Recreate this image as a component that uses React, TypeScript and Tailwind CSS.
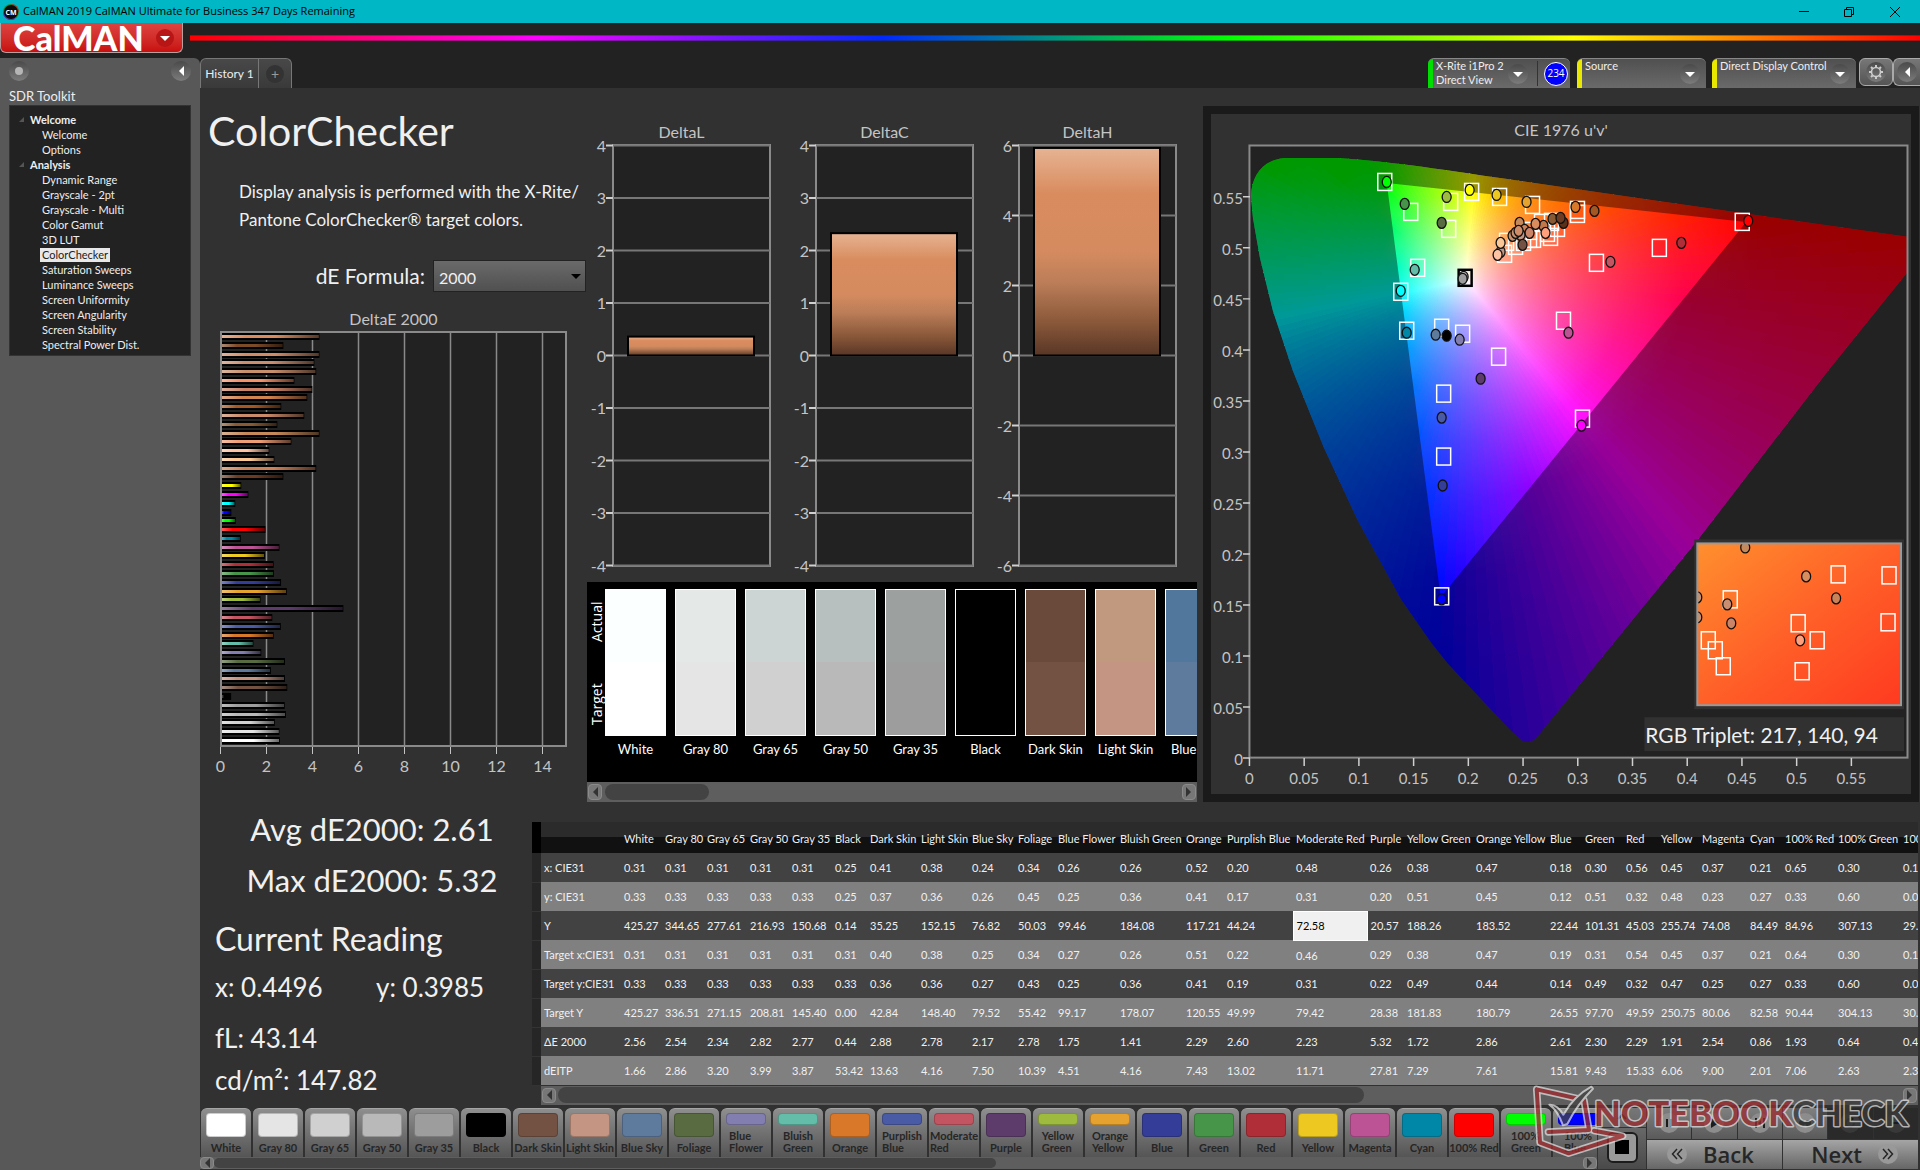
import type { ReactNode } from "react";

/*** colour patches: name, target, measured ***/
const PATCHES = [
  { name: "White", target: "#ffffff", actual: "#fcffff" },
  { name: "Gray 80", target: "#e5e5e5", actual: "#e4e9e8" },
  { name: "Gray 65", target: "#d0d0d0", actual: "#cdd4d4" },
  { name: "Gray 50", target: "#b9b9b9", actual: "#b8bfbf" },
  { name: "Gray 35", target: "#9d9d9d", actual: "#9ca09f" },
  { name: "Black", target: "#000000", actual: "#000000" },
  { name: "Dark Skin", target: "#735243", actual: "#6a4a3a" },
  { name: "Light Skin", target: "#c39582", actual: "#c1997f" },
  { name: "Blue Sky", target: "#5e7a9d", actual: "#52779c" },
  { name: "Foliage", target: "#586b41", actual: "#586b41" },
  { name: "Blue Flower", target: "#827eaf", actual: "#827eaf" },
  { name: "Bluish Green", target: "#63bda8", actual: "#63bda8" },
  { name: "Orange", target: "#d97829", actual: "#d97829" },
  { name: "Purplish Blue", target: "#4a5ba5", actual: "#4a5ba5" },
  { name: "Moderate Red", target: "#c35461", actual: "#c35461" },
  { name: "Purple", target: "#5d3c6b", actual: "#5d3c6b" },
  { name: "Yellow Green", target: "#9ebb40", actual: "#9ebb40" },
  { name: "Orange Yellow", target: "#e6a22f", actual: "#e6a22f" },
  { name: "Blue", target: "#343d97", actual: "#343d97" },
  { name: "Green", target: "#479549", actual: "#479549" },
  { name: "Red", target: "#b02e37", actual: "#b02e37" },
  { name: "Yellow", target: "#edc821", actual: "#edc821" },
  { name: "Magenta", target: "#bb5394", actual: "#bb5394" },
  { name: "Cyan", target: "#0087a7", actual: "#0087a7" },
  { name: "100% Red", target: "#ff0000", actual: "#ff0000" },
  { name: "100% Green", target: "#00ff00", actual: "#00ff00" },
  { name: "100% Blue", target: "#0000ff", actual: "#0000ff" },
];

const COL_WIDTHS = [
  41, 42, 43, 42, 43, 35, 51, 51, 46, 40, 62, 66, 41, 69, 74, 37, 69, 74, 35,
  41, 35, 41, 48, 35, 53, 65, 60,
];

const ROWS = [
  { label: "x: CIE31", values: "0.31 0.31 0.31 0.31 0.31 0.25 0.41 0.38 0.24 0.34 0.26 0.26 0.52 0.20 0.48 0.26 0.38 0.47 0.18 0.30 0.56 0.45 0.37 0.21 0.65 0.30 0.15" },
  { label: "y: CIE31", values: "0.33 0.33 0.33 0.33 0.33 0.25 0.37 0.36 0.26 0.45 0.25 0.36 0.41 0.17 0.31 0.20 0.51 0.45 0.12 0.51 0.32 0.48 0.23 0.27 0.33 0.60 0.06" },
  { label: "Y", values: "425.27 344.65 277.61 216.93 150.68 0.14 35.25 152.15 76.82 50.03 99.46 184.08 117.21 44.24 72.58 20.57 188.26 183.52 22.44 101.31 45.03 255.74 74.08 84.49 84.96 307.13 29.89" },
  { label: "Target x:CIE31", values: "0.31 0.31 0.31 0.31 0.31 0.31 0.40 0.38 0.25 0.34 0.27 0.26 0.51 0.22 0.46 0.29 0.38 0.47 0.19 0.31 0.54 0.45 0.37 0.21 0.64 0.30 0.15" },
  { label: "Target y:CIE31", values: "0.33 0.33 0.33 0.33 0.33 0.33 0.36 0.36 0.27 0.43 0.25 0.36 0.41 0.19 0.31 0.22 0.49 0.44 0.14 0.49 0.32 0.47 0.25 0.27 0.33 0.60 0.06" },
  { label: "Target Y", values: "425.27 336.51 271.15 208.81 145.40 0.00 42.84 148.40 79.52 55.42 99.17 178.07 120.55 49.99 79.42 28.38 181.83 180.79 26.55 97.70 49.59 250.75 80.06 82.58 90.44 304.13 30.70" },
  { label: "ΔE 2000", values: "2.56 2.54 2.34 2.82 2.77 0.44 2.88 2.78 2.17 2.78 1.75 1.41 2.29 2.60 2.23 5.32 1.72 2.86 2.61 2.30 2.29 1.91 2.54 0.86 1.93 0.64 0.45" },
  { label: "dEITP", values: "1.66 2.86 3.20 3.99 3.87 53.42 13.63 4.16 7.50 10.39 4.51 4.16 7.43 13.02 11.71 27.81 7.29 7.61 15.81 9.43 15.33 6.06 9.00 2.01 7.06 2.63 2.30" },
];

/*** DeltaE bars, top to bottom ***/
const DELTA_E: [number, string][] = [
  [4.28, "#d98c5e"], [2.71, "#7d4a28"], [4.28, "#d08c68"], [4.06, "#c98d70"],
  [4.14, "#c78f6c"], [3.19, "#f4926a"], [3.97, "#cb8468"], [3.75, "#d0824f"],
  [2.62, "#a45722"], [3.62, "#cb8a69"], [2.45, "#875a33"], [4.28, "#c68a5a"],
  [3.06, "#ee9d74"], [2.1, "#fdc3a3"], [2.32, "#fac796"], [4.14, "#cb8259"],
  [2.71, "#6c3b22"], [0.88, "#ffff00"], [1.19, "#ff00ff"], [0.62, "#00ffff"],
  [0.45, "#0000ff"], [0.64, "#00ff00"], [1.93, "#ff0000"], [0.86, "#0087a7"],
  [2.54, "#bb5394"], [1.91, "#edc821"], [2.29, "#b02e37"], [2.3, "#479549"],
  [2.61, "#343d97"], [2.86, "#e6a22f"], [1.72, "#9ebb40"], [5.32, "#5d3c6b"],
  [2.23, "#c35461"], [2.6, "#4a5ba5"], [2.29, "#d97829"], [1.41, "#63bda8"],
  [1.75, "#827eaf"], [2.78, "#586b41"], [2.17, "#5e7a9d"], [2.78, "#c39582"],
  [2.88, "#735243"], [0.44, "#000000"], [2.77, "#9d9d9d"], [2.82, "#b9b9b9"],
  [2.34, "#d0d0d0"], [2.54, "#e5e5e5"], [2.56, "#ffffff"],
];

const TREE = [
  { title: "Welcome", items: ["Welcome", "Options"] },
  {
    title: "Analysis",
    items: [
      "Dynamic Range", "Grayscale - 2pt", "Grayscale - Multi", "Color Gamut",
      "3D LUT", "ColorChecker", "Saturation Sweeps", "Luminance Sweeps",
      "Screen Uniformity", "Screen Angularity", "Screen Stability",
      "Spectral Power Dist.",
    ],
  },
];

/*** chromaticity chart geometry ***/
const U0 = 1249.5;
const V0 = 758;
const U_SCALE = 1096;
const V_SCALE = 1022;
const WHITE = { x: 1466, y: 279 };
const TRIANGLE = [[1387, 182], [1747, 221], [1441, 597]];
const LOCUS =
  "M1251 195 C1252 175 1262 159 1285 157 L1338 157 C1390 160 1450 170 1521 180 L1659 200 L1908 236 L1908 272 L1829 370 L1698 540 L1538 736 Q1531 744 1524 741 Q1516 736 1494 712 L1448 663 L1432 643 L1402 600 L1358 520 L1324 447 L1293 370 L1273 310 L1260 257 L1253 217 Z";

const SQUARES = [
  [1385, 181], [1411, 211], [1451, 201], [1472, 191], [1500, 196], [1533, 204],
  [1578, 209], [1578, 213], [1449, 228], [1418, 267], [1401, 291], [1407, 330],
  [1442, 327], [1463, 333], [1499, 356], [1564, 320], [1597, 262], [1660, 247],
  [1743, 221], [1444, 393], [1444, 456], [1583, 418], [1442, 596], [1507, 241],
  [1505, 253], [1516, 245], [1524, 241], [1530, 238], [1534, 238], [1542, 222],
  [1551, 236], [1558, 227], [1552, 221], [1530, 230], [1548, 232],
];

const DOTS: [number, number, string][] = [
  [1447, 196, "#9ebb40"], [1470, 189, "#ffff00"], [1497, 194, "#edc821"],
  [1527, 201, "#e6a22f"], [1576, 206, "#d97829"], [1595, 210, "#a45722"],
  [1564, 222, "#5a3019"], [1553, 218, "#875a33"], [1561, 217, "#6c3b22"],
  [1544, 225, "#c07848"], [1520, 222, "#c68a5a"], [1525, 229, "#cb8259"],
  [1521, 234, "#c39582"], [1513, 235, "#c78f6c"], [1516, 232, "#c98d70"],
  [1519, 230, "#d08c68"], [1536, 223, "#d98c5e"], [1530, 232, "#cb8468"],
  [1546, 232, "#ff9f7c"], [1523, 244, "#735243"], [1501, 251, "#c39582"],
  [1501, 242, "#fac796"], [1498, 254, "#fdc3a3"], [1442, 222, "#586b41"],
  [1611, 261, "#c35461"], [1387, 181, "#00ff00"], [1405, 203, "#479549"],
  [1415, 269, "#63bda8"], [1401, 290, "#00ffff"], [1407, 332, "#0087a7"],
  [1436, 334, "#5e7a9d"], [1447, 335, "#000000"], [1460, 339, "#827eaf"],
  [1569, 332, "#bb5394"], [1682, 242, "#b02e37"], [1749, 220, "#ff0000"],
  [1481, 378, "#5d3c6b"], [1442, 417, "#4a5ba5"], [1443, 485, "#343d97"],
  [1582, 425, "#ff00ff"], [1442, 599, "#0000ff"], [1464, 276, "#b9b9b9"],
  [1463, 278, "#9d9d9d"],
];

const INSET_SQUARES = [
  [1839, 574], [1890, 575], [1731, 599], [1799, 623], [1889, 622], [1818, 640],
  [1709, 640], [1716, 650], [1724, 666], [1803, 671],
];

const INSET_DOTS: [number, number, string][] = [
  [1746, 547, "#c68a5a"], [1807, 576, "#d98c5e"], [1837, 598, "#cb8259"],
  [1728, 604, "#c98d70"], [1732, 623, "#cb8468"], [1801, 640, "#ff9f7c"],
  [1698, 597, "#c78f6c"], [1698, 617, "#c78f6c"],
];

// display colour for a point of the u'v' plane, brightest channel at full
function colorAt(px: number, py: number) {
  const u = (px - U0) / U_SCALE;
  const v = (V0 - py) / V_SCALE;
  const X = (9 * u) / (4 * v);
  const Z = (12 - 3 * u - 20 * v) / (4 * v);
  const rgb = [
    3.2406 * X - 1.5372 - 0.4986 * Z,
    -0.9689 * X + 1.8758 + 0.0415 * Z,
    0.0557 * X - 0.204 + 1.057 * Z,
  ].map((c) => Math.max(c, 0));
  const top = Math.max(...rgb);
  return `rgb(${rgb.map((c) => Math.round(255 * Math.pow(c / top, 0.77))).join(",")})`;
}

const WEDGES = Array.from({ length: 180 }, (_, i) => {
  const a = (i * Math.PI) / 90;
  const mid = a + Math.PI / 180;
  const end = a + Math.PI / 85;
  const r = 620;
  const stops = [0, 10, 20, 35, 50, 70, 90, 120, 160, 220, 300, 400, 500].map(
    (d) => {
      // stay inside the region where the conversion holds
      const y = Math.min(WHITE.y + d * Math.sin(mid), 748);
      const x = Math.max(WHITE.x + d * Math.cos(mid), 1240);
      return { d: d / r, c: colorAt(x, y) };
    }
  );
  return {
    path: `M${WHITE.x} ${WHITE.y}L${WHITE.x + r * Math.cos(a)} ${WHITE.y + r * Math.sin(a)}L${WHITE.x + r * Math.cos(end)} ${WHITE.y + r * Math.sin(end)}Z`,
    stops,
    r,
  };
});

/*****************************************************
           Small parts
*****************************************************/
function RoundIcon({ children }: { children: ReactNode }) {
  return (
    <span className="grid size-5 shrink-0 place-content-center rounded-full bg-linear-to-b from-[#4a4a4a] to-[#7c7c7c]">
      {children}
    </span>
  );
}

function Triangle({ dir, className }: { dir: "left" | "right" | "down"; className?: string }) {
  const d =
    dir === "left" ? "M8 0 3 5l5 5z" : dir === "right" ? "M2 0l5 5-5 5z" : "M0 3h10L5 8z";
  return (
    <svg viewBox="0 0 10 10" className={className ?? "size-[10px]"} fill="currentColor">
      <path d={d} />
    </svg>
  );
}

function ScrollButton({ dir }: { dir: "left" | "right" }) {
  return (
    <button
      aria-label={`Scroll ${dir}`}
      className="grid h-full w-[14px] shrink-0 place-content-center rounded-sm border border-[#8a8a8a] bg-[#777] text-[#333]"
    >
      <Triangle dir={dir} />
    </button>
  );
}

/*****************************************************
           Header
*****************************************************/
function TitleBar() {
  return (
    <div className="flex h-[23px] items-center bg-[#00b7c5] pl-[3px] font-['Open_Sans','Noto_Sans',sans-serif] text-black">
      <svg viewBox="0 0 16 16" className="mr-1 size-4">
        <circle cx="8" cy="8" r="8" fill="#1f8a3a" />
        <path d="M8 8 0 8A8 8 0 0 0 12 15Z" fill="#5a35c8" />
        <path d="M8 8 16 8A8 8 0 0 0 8 0Z" fill="#b03a2a" />
        <circle cx="8" cy="8" r="7" fill="#0a0a0a" />
        <text x="8" y="11" textAnchor="middle" fontSize="7" fontWeight="700" fill="#fff">CM</text>
      </svg>
      <span className="text-[11px]">CalMAN 2019 CalMAN Ultimate for Business 347 Days Remaining</span>
      <div className="ml-auto flex pr-[19px]">
        <button aria-label="Minimize" className="mr-[33px]">
          <svg viewBox="0 0 12 12" className="size-3" stroke="currentColor" fill="none"><path d="M1 5.500h10" /></svg>
        </button>
        <button aria-label="Restore" className="mr-[34px]">
          <svg viewBox="0 0 12 12" className="size-3" stroke="currentColor" fill="none"><path d="M1.500 3.500h7v7h-7zM3.500 3.500v-2h7v7h-2" /></svg>
        </button>
        <button aria-label="Close">
          <svg viewBox="0 0 12 12" className="size-3" stroke="currentColor" fill="none"><path d="M1 1l10 10M11 1L1 11" /></svg>
        </button>
      </div>
    </div>
  );
}

function Brand() {
  return (
    <div className="flex h-[35px] items-start">
      <button className="flex h-[30px] w-[183px] shrink-0 items-center justify-between rounded-b-md border border-t-0 border-[#b8a0a0] bg-linear-to-b from-[#dd4340] to-[#c80d0d] pr-2 pl-3 text-[34px] leading-[28px] font-black text-white">
        CalMAN
        <span className="grid size-[18px] place-content-center rounded-full bg-[#b81616]">
          <Triangle dir="down" />
        </span>
      </button>
      <div className="mt-3 ml-[7px] h-[6px] flex-1 border-y border-[#222]/40 bg-[linear-gradient(to_right,#f00,#f0f_20%,#0028ff_40%,#0f0_60%,#ff0_80%,#f00)]" />
    </div>
  );
}

function Sidebar() {
  return (
    <aside className="w-[200px] shrink-0 rounded-tr-md bg-[#585858] pt-[3px] pr-[9px] pl-[9px]">
      <div className="flex items-center justify-between">
        <RoundIcon><span className="block size-2 rounded-full bg-[#b5b5b5]" /></RoundIcon>
        <button aria-label="Collapse" className="text-white">
          <RoundIcon><Triangle dir="left" /></RoundIcon>
        </button>
      </div>
      <h2 className="mt-[5px] text-[13px] leading-5 text-[#eee]">SDR Toolkit</h2>
      <nav className="mt-[-1px] border border-[#333] bg-[#222] pt-[6px] pb-[3px] text-[11px] text-[#eee]">
        {TREE.map((g) => (
          <div key={g.title}>
            <h3 className="flex items-center gap-[6px] pl-[9px] leading-[15px] font-bold">
              <svg viewBox="0 0 6 6" className="size-[5px]" fill="#555"><path d="M6 0v6H0z" /></svg>
              {g.title}
            </h3>
            <ul>
              {g.items.map((item) => (
                <li key={item} className="flex h-[15px] items-center pl-[30px]">
                  <a
                    href="#"
                    className={item === "ColorChecker" ? "bg-[#e8e8e8] px-[2px] leading-[14px] text-[#222]" : "px-[2px] leading-[14px]"}
                  >
                    {item}
                  </a>
                </li>
              ))}
            </ul>
          </div>
        ))}
      </nav>
    </aside>
  );
}

function Device({ name, sub, bar, width, children }: { name: string; sub?: string; bar: string; width: string; children?: ReactNode }) {
  return (
    <div className={`flex h-[30px] overflow-hidden rounded-t-md border-t border-[#888] bg-linear-to-b from-[#505050] to-[#6a6a6a] ${width}`}>
      <span className={`w-[5px] shrink-0 ${bar}`} />
      <button className="flex min-w-0 flex-1 items-center justify-between pr-[6px] pl-[3px] text-left text-[#eee]">
        <span className="self-start text-[11px] leading-[14px] whitespace-nowrap">
          {name}
          <br />
          {sub}
        </span>
        <span className="text-white"><RoundIcon><Triangle dir="down" /></RoundIcon></span>
      </button>
      {children}
    </div>
  );
}

function TopTabs() {
  return (
    <div className="flex h-[30px] items-start">
      <div className="flex h-[30px] overflow-hidden rounded-t-md border border-b-0 border-[#777] bg-linear-to-b from-[#484848] to-[#3a3a3a]">
        <button className="w-[58px] border-r border-[#777] text-xs whitespace-nowrap text-[#eee]">History 1</button>
        <button aria-label="New tab" className="grid w-8 place-content-center">
          <span className="grid size-[18px] place-content-center rounded-full bg-[#333] text-sm leading-none text-[#999]">+</span>
        </button>
      </div>
      <div className="ml-auto flex items-start">
        <Device name="X-Rite i1Pro 2" sub="Direct View" bar="bg-[#0d0]" width="w-[142px]">
          <span className="my-[2px] ml-[3px] w-px bg-[#333]" />
          <span className="mr-[2px] ml-[6px] grid size-[24px] shrink-0 place-content-center self-center rounded-full border border-white bg-[#00f] font-['Open_Sans',sans-serif] text-[10px] text-white">234</span>
        </Device>
        <span className="w-[7px]" />
        <Device name="Source" bar="bg-[#e8e800]" width="w-[129px]" />
        <span className="w-[6px]" />
        <Device name="Direct Display Control" bar="bg-[#e8e800]" width="w-[144px]" />
        <button aria-label="Settings" className="ml-[3px] grid h-[28px] w-[34px] place-content-center rounded-md border border-[#aaa] bg-linear-to-b from-[#777] to-[#555]">
          <RoundIcon>
            <svg viewBox="0 0 16 16" className="size-4" fill="none" stroke="#ccc">
              <circle cx="8" cy="8" r="4.500" strokeWidth="1.600" />
              <path d="M8 1v2M8 13v2M1 8h2M13 8h2M3 3l1.500 1.500M11.500 11.500L13 13M13 3l-1.500 1.500M4.500 11.500L3 13" strokeWidth="2" />
            </svg>
          </RoundIcon>
        </button>
        <button aria-label="Expand" className="grid h-[28px] w-[27px] place-content-center rounded-l-md border border-r-0 border-[#aaa] bg-linear-to-b from-[#777] to-[#555] text-white">
          <RoundIcon><Triangle dir="left" /></RoundIcon>
        </button>
      </div>
    </div>
  );
}

/*****************************************************
           Charts
*****************************************************/
function DeltaEChart() {
  return (
    <svg viewBox="0 0 387 450" className="block w-full" fontSize="16" fill="#c4c4c4">
      <defs>
        <linearGradient id="shineX">
          <stop offset="0" stopColor="#fff" stopOpacity="0.35" />
          <stop offset="0.250" stopColor="#fff" stopOpacity="0" />
          <stop offset="0.550" stopColor="#000" stopOpacity="0" />
          <stop offset="1" stopColor="#000" stopOpacity="0.6" />
        </linearGradient>
      </defs>
      <rect x="21" y="1" width="345" height="414" fill="#222" />
      {[2, 4, 6, 8, 10, 12, 14].map((t) => (
        <path key={t} d={`M${20.5 + t * 23} 1v414`} stroke="#8a8a8a" strokeWidth="1.500" />
      ))}
      {DELTA_E.map(([value, color], i) => {
        const y = Math.round(5 + i * 8.78);
        const w = value * 23;
        return (
          <g key={i}>
            <rect x="21" y={y - 3} width={w} height="7" fill="#000" />
            <rect x="22" y={y - 1} width={w - 2} height="3" fill={color} />
            <rect x="22" y={y - 1} width={w - 2} height="3" fill="url(#shineX)" />
          </g>
        );
      })}
      <rect x="21" y="1" width="345" height="414" fill="none" stroke="#8a8a8a" strokeWidth="2" />
      {[0, 2, 4, 6, 8, 10, 12, 14].map((t) => (
        <g key={t}>
          <path d={`M${20.5 + t * 23} 416v7`} stroke="#c4c4c4" />
          <text x={20.5 + t * 23} y="441" textAnchor="middle">{t}</text>
        </g>
      ))}
    </svg>
  );
}

function DeltaChart({ title, max, step, value }: { title: string; max: number; step: number; value: number }) {
  const y = (v: number) => 213.5 - (v / max) * 210;
  const ticks: number[] = [];
  for (let t = max; t >= -max; t -= step) ticks.push(t);
  return (
    <figure className="min-w-0 flex-1">
      <figcaption className="pr-[14px] text-center text-base leading-5 text-[#c4c4c4]">{title}</figcaption>
      <svg viewBox="0 0 203 433" className="block w-full overflow-visible" fontSize="16" fill="#c4c4c4">
        <defs>
          <linearGradient id="copper" x2="0" y2="1">
            <stop offset="0" stopColor="#e6b393" />
            <stop offset="0.220" stopColor="#d98c5e" />
            <stop offset="0.500" stopColor="#d58b5f" />
            <stop offset="0.650" stopColor="#bb7d58" />
            <stop offset="0.850" stopColor="#875638" />
            <stop offset="1" stopColor="#583626" />
          </linearGradient>
        </defs>
        <rect x="26" y="3" width="157" height="421" fill="#222" stroke="#8a8a8a" strokeWidth="2" />
        {ticks.map((t) => (
          <g key={t}>
            <path d={`M25 ${y(t)}h158`} stroke="#777" strokeWidth="2" />
            <path d={`M19 ${y(t)}h7`} stroke="#d0d0d0" strokeWidth="2" />
            <text x="19" y={y(t) + 6} textAnchor="end">{t}</text>
          </g>
        ))}
        <rect x="41" y={y(value)} width="126" height={y(0) - y(value)} fill="url(#copper)" stroke="#000" strokeWidth="2" />
      </svg>
    </figure>
  );
}

function Marker({ x, y, color }: { x: number; y: number; color: string }) {
  return <ellipse cx={x} cy={y} rx="4.500" ry="5.500" fill={color} stroke="#111" strokeWidth="1.300" />;
}

function CieChart() {
  const tri = `M${TRIANGLE.map((p) => p.join(" ")).join("L")}Z`;
  const steps = Array.from({ length: 12 }, (_, i) => i);
  return (
    <svg viewBox="1211 142 701 652" className="block w-full" fontSize="15" fill="#c4c4c4">
      <defs>
        <clipPath id="locus"><path d={LOCUS} /></clipPath>
        <clipPath id="inset"><rect x="1698" y="543" width="204" height="162" /></clipPath>
        <linearGradient id="insetFill" x1="0" y1="0" x2="1" y2="1">
          <stop offset="0" stopColor="#ff8f2e" />
          <stop offset="0.500" stopColor="#ff6028" />
          <stop offset="1" stopColor="#ff3a20" />
        </linearGradient>
        {WEDGES.map((w, i) => (
          <radialGradient key={i} id={`w${i}`} gradientUnits="userSpaceOnUse" cx={WHITE.x} cy={WHITE.y} r={w.r}>
            {w.stops.map((s) => <stop key={s.d} offset={s.d} stopColor={s.c} />)}
          </radialGradient>
        ))}
      </defs>
      <rect x="1249" y="144" width="660" height="614" fill="#222" />
      <g clipPath="url(#locus)">
        <g shapeRendering="crispEdges">
          {WEDGES.map((w, i) => <path key={i} d={w.path} fill={`url(#w${i})`} />)}
        </g>
        <path d={`M1211 142h701v652h-701z${tri}`} fillRule="evenodd" fill="#000" fillOpacity="0.4" />
      </g>
      <rect x="1249.500" y="144.500" width="659" height="613" fill="none" stroke="#8a8a8a" strokeWidth="2" />
      {steps.map((i) => (
        <g key={i}>
          <path d={`M${U0 + i * 54.8} 758v8M1250 ${V0 - i * 51.1}h-7`} stroke="#d0d0d0" strokeWidth="1.500" />
          <text x={U0 + i * 54.8} y="784" textAnchor="middle">{i * 5 / 100}</text>
          <text x="1243" y={V0 - i * 51.1 + 7} textAnchor="end">{i * 5 / 100}</text>
        </g>
      ))}
      <g fill="none" stroke="#fff" strokeWidth="1.500">
        {SQUARES.map(([x, y], i) => <rect key={i} x={x - 7} y={y - 8.5} width="14" height="17" />)}
      </g>
      <rect x="1459" y="269" width="13" height="16" fill="none" stroke="#000" strokeWidth="2.500" />
      {DOTS.map(([x, y, c], i) => <Marker key={i} x={x} y={y} color={c} />)}

      <rect x="1695" y="539" width="210" height="170" fill="#313131" />
      <rect x="1698" y="543" width="204" height="162" fill="url(#insetFill)" />
      <g clipPath="url(#inset)">
        <g fill="none" stroke="#fff" strokeWidth="1.500">
          {INSET_SQUARES.map(([x, y], i) => <rect key={i} x={x - 7} y={y - 8.5} width="14" height="17" />)}
        </g>
        {INSET_DOTS.map(([x, y, c], i) => <Marker key={i} x={x} y={y} color={c} />)}
      </g>
      <rect x="1698" y="543" width="204" height="162" fill="none" stroke="#999" strokeWidth="2" />
      <rect x="1645" y="717" width="260" height="34" fill="#313131" />
      <text x="1646" y="743" fontSize="21" fill="#f0f0f0">RGB Triplet: 217, 140, 94</text>
    </svg>
  );
}

/*****************************************************
           Panels
*****************************************************/
function Intro() {
  return (
    <section className="pt-[13px]">
      <h1 className="pl-2 text-[41px] leading-[60px] text-[#f0f0f0]">ColorChecker</h1>
      <p className="mt-[17px] pl-[39px] text-[17px] leading-7 whitespace-nowrap text-[#f0f0f0]">
        Display analysis is performed with the X-Rite/
        <br />
        Pantone ColorChecker® target colors.
      </p>
      <div className="mt-[26px] flex h-8 items-center justify-end pr-px">
        <label htmlFor="formula" className="mr-2 text-[21px] text-[#f0f0f0]">dE Formula:</label>
        <div className="relative">
          <select
            id="formula"
            defaultValue="2000"
            className="h-8 w-[153px] appearance-none border border-[#222] bg-linear-to-b from-[#6a6a6a] to-[#505050] pt-[3px] pl-[5px] text-base text-[#f0f0f0]"
          >
            <option>2000</option>
            <option>1994</option>
            <option>1976</option>
          </select>
          <Triangle dir="down" className="pointer-events-none absolute top-[11px] right-[5px] size-[10px] text-black" />
        </div>
      </div>
      <h3 className="mt-[15px] text-center text-base leading-6 text-[#c4c4c4]">DeltaE 2000</h3>
      <DeltaEChart />
    </section>
  );
}

function Comparison() {
  return (
    <div className="mt-[7px] mr-[6px] bg-black">
      <div className="flex h-[200px] overflow-hidden pt-[7px]">
        <div className="flex w-[18px] shrink-0 flex-col items-center font-['Open_Sans',sans-serif] text-sm leading-[17px] text-white">
          <span className="flex h-[66px] rotate-180 items-center justify-center [writing-mode:vertical-rl]">Actual</span>
          <span className="mt-4 flex h-[66px] rotate-180 items-center justify-center [writing-mode:vertical-rl]">Target</span>
        </div>
        {PATCHES.slice(0, 9).map((p) => (
          <div key={p.name} className="mr-[9px] w-[61px] shrink-0 text-center text-[13px] text-white">
            <div className="h-[147px] border border-white" style={{ background: `linear-gradient(${p.actual} 50%, ${p.target} 50%)` }} />
            <span className="mt-[3px] block leading-5 whitespace-nowrap">{p.name}</span>
          </div>
        ))}
      </div>
      <div className="flex h-5 items-center bg-[#5e5e5e] px-px py-[2px]">
        <ScrollButton dir="left" />
        <span className="ml-[3px] h-4 w-[104px] rounded-lg bg-[#434343]" />
        <span className="ml-auto h-full"><ScrollButton dir="right" /></span>
      </div>
    </div>
  );
}

function Readings() {
  return (
    <section className="w-[332px] shrink-0 pl-[15px] text-[#f0f0f0]">
      <div className="-mt-4 pr-[3px] text-center text-[31px] leading-[51px]">
        <p>Avg dE2000: 2.61</p>
        <p>Max dE2000: 5.32</p>
      </div>
      <h2 className="mt-[7px] text-[32px] leading-[51px]">Current Reading</h2>
      <p className="mt-[2px] flex text-[26px] leading-[42px]">
        <span className="w-[161px]">x: 0.4496</span>
        <span>y: 0.3985</span>
      </p>
      <p className="mt-[9px] text-[26px] leading-[42px]">fL: 43.14</p>
      <p className="text-[26px] leading-[42px]">cd/m²: 147.82</p>
    </section>
  );
}

function DataTable() {
  return (
    <section className="mt-[2px] flex min-w-0 flex-1 flex-col pr-[2px]">
      <div className="overflow-hidden">
        <table className="w-[1428px] table-fixed border-collapse text-left text-[11px] text-[#f0f0f0]">
          <colgroup>
            <col className="w-[9px]" />
            <col className="w-[80px]" />
            {COL_WIDTHS.map((w, i) => <col key={i} style={{ width: w }} />)}
          </colgroup>
          <thead>
            <tr className="h-[31px] bg-linear-to-b from-[#2b2b2b] from-50% to-[#111] to-50%">
              <td className="bg-black" />
              <td />
              {PATCHES.map((p) => (
                <th key={p.name} scope="col" className="overflow-visible pt-[3px] pr-0 pl-[3px] font-normal whitespace-nowrap">{p.name}</th>
              ))}
            </tr>
          </thead>
          <tbody>
            {ROWS.map((row, r) => (
              <tr key={row.label} className={r % 2 ? "h-[29px] bg-[#808080]" : "h-[29px] bg-[#424242]"}>
                <td className="border-b border-[#333] bg-[#262626]" />
                <th scope="row" className="p-0 pt-[2px] pl-[3px] font-normal whitespace-nowrap">{row.label}</th>
                {row.values.split(" ").map((v, c) => (
                  <td
                    key={c}
                    className={r === 2 && c === 14 ? "border border-white bg-[#f0f0f0] p-0 pt-[2px] pl-[3px] text-black" : "p-0 pt-[2px] pl-[3px]"}
                  >
                    {v}
                  </td>
                ))}
              </tr>
            ))}
          </tbody>
        </table>
      </div>
      <div className="ml-[9px] flex h-[19px] items-center bg-[#5e5e5e] px-px py-[2px]">
        <ScrollButton dir="left" />
        <span className="mx-[2px] flex h-4 flex-1">
          <span className="w-[60%] rounded-lg bg-[#434343]" />
        </span>
        <ScrollButton dir="right" />
      </div>
    </section>
  );
}

function PatchBar() {
  return (
    <div className="min-w-0 flex-1 overflow-hidden">
      <div className="flex h-[49px] gap-[2px] pl-px">
        {PATCHES.map((p) => {
          const words = p.name.split(" ");
          const split = p.name.length > 10 || p.name === "100% Green" || p.name === "100% Blue";
          return (
            <button
              key={p.name}
              className="flex w-[50px] shrink-0 flex-col items-center rounded-t-md border-t border-[#a5a5a5] bg-linear-to-b from-[#8e8e8e] to-[#555] pt-[4px] text-[11px] leading-3 font-bold whitespace-nowrap text-[#262626]"
            >
              <span
                className={split ? "h-3 w-10 shrink-0 rounded-sm border border-black/20" : "h-6 w-10 shrink-0 rounded-sm border border-black/20"}
                style={{ background: p.target }}
              />
              <span className="mt-[5px] text-left">
                {split ? <>{words[0]}<br />{words[1]}</> : p.name}
              </span>
            </button>
          );
        })}
      </div>
      <div className="flex h-3 items-center bg-[#5e5e5e]">
        <ScrollButton dir="left" />
        <span className="h-[10px] w-[56%] rounded-md bg-[#434343]" />
        <span className="ml-auto h-full"><ScrollButton dir="right" /></span>
      </div>
    </div>
  );
}

function Transport() {
  const icons = [
    "M5 4h2v8H5zM9 4h2v8H9z",
    "M5 3l8 5-8 5z",
    "M3 3h2v10H3zM11 3h2v10h-2zM6 8l3-3v6z",
    "M2 8a3 3 0 0 1 6 0 3 3 0 0 0 6 0 3 3 0 0 0-6 0 3 3 0 0 1-6 0z",
    "M8 3a5 5 0 1 0 5 5h-2a3 3 0 1 1-3-3v2l4-3-4-3z",
    "M4 7h8v2H4z",
  ];
  const names = ["Pause", "Play", "Read series", "Continuous", "Repeat", "Remove"];
  return (
    <>
      <div className="flex w-[49px] shrink-0 flex-col items-center border-l border-[#333] bg-linear-to-b from-[#777] to-[#4a4a4a]">
        <button aria-label="Up" className="grid h-[20px] w-full place-content-center border-b border-[#333] text-[#222]">
          <svg viewBox="0 0 12 8" className="h-2 w-3" fill="none" stroke="currentColor" strokeWidth="2"><path d="M2 6l4-4 4 4" /></svg>
        </button>
        <button aria-label="Stop" className="mt-1 grid h-[31px] w-[31px] place-content-center rounded-md border-2 border-[#1c1c1c] bg-[#999]">
          <span className="block size-[14px] bg-black" />
        </button>
      </div>
      <div className="ml-px w-[273px] shrink-0 pr-[2px]">
        <div className="flex h-[31px] gap-px">
          {icons.map((d, i) => (
            <button
              key={d}
              aria-label={names[i]}
              className={i < 4 ? "grid flex-1 place-content-center bg-linear-to-b from-[#808080] to-[#5a5a5a]" : "grid flex-1 place-content-center bg-[#2a2a2a]"}
            >
              <span className={i < 4 ? "grid size-5 place-content-center rounded-full bg-[#8c8c8c]" : "grid size-5 place-content-center rounded-full bg-[#383838]"}>
                <svg viewBox="0 0 16 16" className="size-4" fill="#1c1c1c"><path d={d} /></svg>
              </span>
            </button>
          ))}
        </div>
        <div className="flex h-[30px] gap-px border-t border-[#333] font-['Open_Sans',sans-serif] text-[22px] leading-7 font-semibold text-[#262626]">
          <button className="flex flex-1 items-center gap-4 bg-linear-to-b from-[#a5a5a5] to-[#666] pl-5">
            <span className="grid size-5 place-content-center rounded-full bg-[#999]">
              <svg viewBox="0 0 12 12" className="size-3" fill="none" stroke="currentColor" strokeWidth="1.500"><path d="M6 1L1.500 6 6 11M11 1L6.500 6l4.500 5" /></svg>
            </span>
            Back
          </button>
          <button className="flex flex-1 items-center justify-end gap-4 bg-linear-to-b from-[#a5a5a5] to-[#666] pr-5">
            Next
            <span className="grid size-5 place-content-center rounded-full bg-[#999]">
              <svg viewBox="0 0 12 12" className="size-3" fill="none" stroke="currentColor" strokeWidth="1.500"><path d="M6 1l4.500 5L6 11M1 1l4.500 5L1 11" /></svg>
            </span>
          </button>
        </div>
      </div>
    </>
  );
}

function Watermark() {
  const shield = "M50 28L192 60L207 150L85 156M50 28L60 188L146 220L308 168L222 152";
  const tick = "M88 74Q112 72 130 104Q162 48 214 20L219 26Q172 72 142 132L129 136Q112 90 88 74Z";
  return (
    <svg viewBox="0 0 1200 270" className="pointer-events-none absolute right-0 bottom-0 w-[400px] opacity-75">
      <g fill="none" strokeLinejoin="round" strokeLinecap="round">
        <path d={shield} stroke="#ddd" strokeWidth="22" />
        <path d={shield} stroke="#a02b2e" strokeWidth="12" />
        <path d={tick} fill="#444" stroke="#ddd" strokeWidth="6" />
      </g>
      <text x="222" y="137" fontWeight="900" fontSize="104" stroke="#ddd" strokeWidth="9" paintOrder="stroke" strokeLinejoin="round">
        <tspan fill="#9c2b2e">NOTEBOOK</tspan>
        <tspan fill="#3a3a3a" fontWeight="700">CHECK</tspan>
      </text>
    </svg>
  );
}

/*****************************************************
           Page
*****************************************************/
export default function App() {
  return (
    <div className="flex min-h-screen flex-col overflow-hidden bg-[#222] font-['Lato',sans-serif]">
      <TitleBar />
      <Brand />
      <div className="flex flex-1">
        <Sidebar />
        <div className="relative flex min-w-0 flex-1 flex-col">
          <TopTabs />
          <main className="flex-1 bg-[#313131]">
            <div className="grid grid-cols-[minmax(0,387fr)_minmax(0,616fr)_minmax(0,717fr)]">
              <Intro />
              <section className="pt-[34px]">
                <div className="flex pr-[7px]">
                  <DeltaChart title="DeltaL" max={4} step={1} value={0.36} />
                  <DeltaChart title="DeltaC" max={4} step={1} value={2.33} />
                  <DeltaChart title="DeltaH" max={6} step={2} value={5.93} />
                </div>
                <Comparison />
              </section>
              <section className="my-[18px] mr-px border-8 border-[#1a1a1a]">
                <h2 className="pt-[3px] text-center text-base leading-[26px] text-[#c4c4c4]">CIE 1976 u'v'</h2>
                <CieChart />
              </section>
            </div>
            <div className="flex">
              <Readings />
              <DataTable />
            </div>
            <div className="mt-[3px] flex">
              <PatchBar />
              <Transport />
            </div>
          </main>
          <Watermark />
        </div>
      </div>
    </div>
  );
}
